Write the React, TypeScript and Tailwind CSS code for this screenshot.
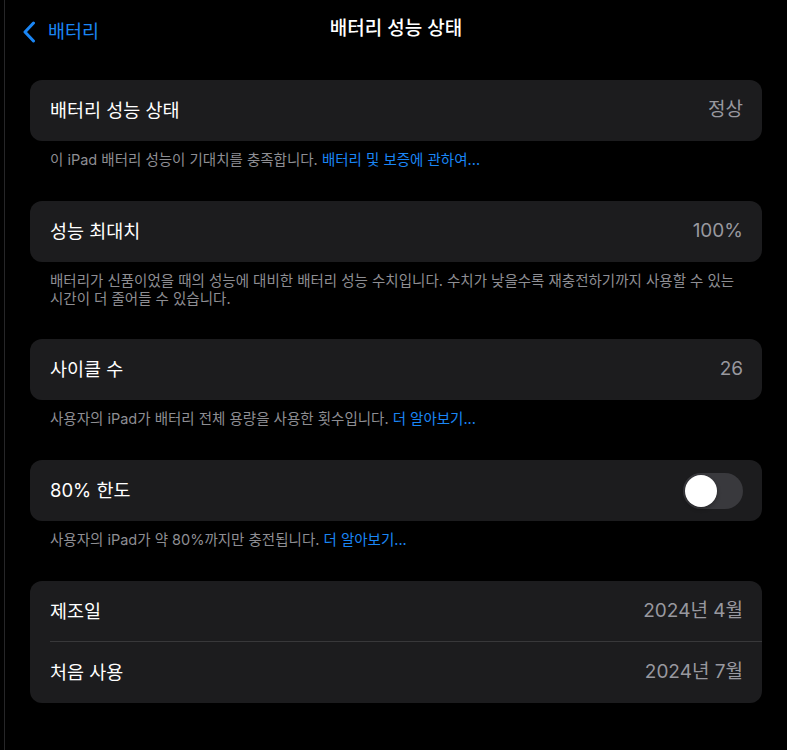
import type { ReactNode } from 'react';

const FONT = "font-['Inter','Noto_Sans_CJK_KR',sans-serif]";

function Card({ children }: { children: ReactNode }) {
  return <div className="overflow-hidden rounded-[12px] bg-[#1c1c1e]">{children}</div>;
}

function Row({ label, value, divider }: { label: string; value?: ReactNode; divider?: boolean }) {
  return (
    <div className="relative flex h-[61px] items-center justify-between pl-5 pr-[19px]">
      <span className="text-[18.5px] text-white">{label}</span>
      {typeof value === 'string' ? <span className="text-[19px] text-[#98989f]">{value}</span> : value}
      {divider && <div className="absolute bottom-0 left-5 right-0 h-px bg-[#38383a]" />}
    </div>
  );
}

function Footer({ children }: { children: ReactNode }) {
  return (
    <p className="mb-[32px] px-5 pt-[10px] text-[14.5px] leading-[18px] text-[#8e8e93]">{children}</p>
  );
}

function Link({ children }: { children: ReactNode }) {
  return <span className="text-[#1a86f5]">{children}</span>;
}

function Toggle() {
  return (
    <div className="flex h-[36px] w-[60px] items-center rounded-full bg-[#39393d] p-[2px]">
      <div className="h-[32px] w-[32px] rounded-full bg-white shadow-[0_2px_4px_rgba(0,0,0,0.3)]" />
    </div>
  );
}

export default function App() {
  return (
    <div className={`flex min-h-[750px] w-full bg-black ${FONT}`}>
      <div className="w-[4px] shrink-0" />
      <div className="w-px shrink-0 bg-[#262628]" />
      <main className="flex-1 px-[25px]">
        <header className="relative flex h-[58px] items-center justify-center">
          <div className="absolute left-[-8px] top-[18px] flex items-center gap-[12px] text-[#1a86f5]">
            <svg width="14" height="22" viewBox="0 0 14 22" fill="none">
              <path d="M11.5 2 L3 11 L11.5 20" stroke="currentColor" strokeWidth="3" strokeLinecap="round" strokeLinejoin="round" />
            </svg>
            <span className="text-[18.5px]">배터리</span>
          </div>
          <h1 className="text-[19px] font-medium text-white">배터리 성능 상태</h1>
        </header>
        <div className="h-[22px]" />

        <Card>
          <Row label="배터리 성능 상태" value="정상" />
        </Card>
        <Footer>
          이 iPad 배터리 성능이 기대치를 충족합니다. <Link>배터리 및 보증에 관하여...</Link>
        </Footer>

        <Card>
          <Row label="성능 최대치" value="100%" />
        </Card>
        <p className="mb-[31px] px-5 pt-[10px] text-[14.5px] leading-[18px] text-[#8e8e93]">
          배터리가 신품이었을 때의 성능에 대비한 배터리 성능 수치입니다. 수치가 낮을수록 재충전하기까지 사용할 수 있는
          <br />
          시간이 더 줄어들 수 있습니다.
        </p>

        <Card>
          <Row label="사이클 수" value="26" />
        </Card>
        <Footer>
          사용자의 iPad가 배터리 전체 용량을 사용한 횟수입니다. <Link>더 알아보기...</Link>
        </Footer>

        <Card>
          <Row label="80% 한도" value={<Toggle />} />
        </Card>
        <Footer>
          사용자의 iPad가 약 80%까지만 충전됩니다. <Link>더 알아보기...</Link>
        </Footer>

        <Card>
          <Row label="제조일" value="2024년 4월" divider />
          <Row label="처음 사용" value="2024년 7월" />
        </Card>
      </main>
    </div>
  );
}
